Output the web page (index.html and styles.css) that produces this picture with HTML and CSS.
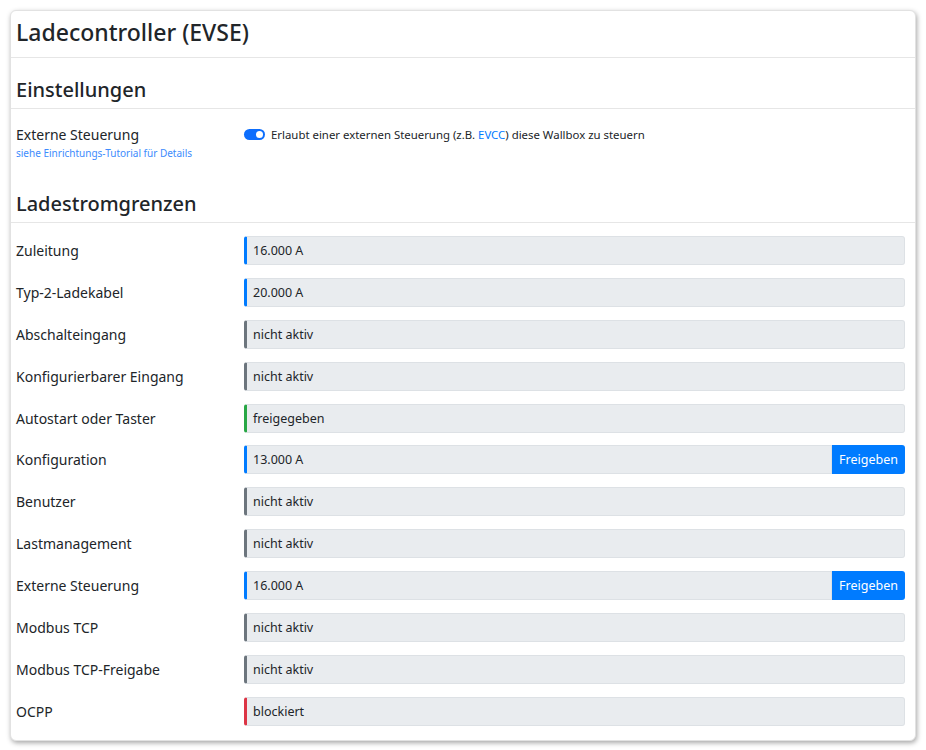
FILE: index.html
```html
<!DOCTYPE html>
<html lang="de">
<head>
    <meta charset="UTF-8">
    <meta name="viewport" content="width=device-width, initial-scale=1.0">
    <title>Ladecontroller (EVSE)</title>
    <link rel="stylesheet" href="styles.css">
</head>
<body>
    <div class="card">
        <div class="card-header">Ladecontroller (EVSE)</div>

        <h2 class="section-title">Einstellungen</h2>
        <div class="setting-row">
            <div class="setting-label">
                <div>Externe Steuerung</div>
                <a class="hint" href="#">siehe Einrichtungs-Tutorial für Details</a>
            </div>
            <div class="setting-control">
                <span class="switch"><span class="knob"></span></span>
                <span>Erlaubt einer externen Steuerung (z.B. <a href="#">EVCC</a>) diese Wallbox zu steuern</span>
            </div>
        </div>

        <h2 class="section-title">Ladestromgrenzen</h2>
        <div class="limits">
            <div class="limit-row">
                <div class="limit-label">Zuleitung</div>
                <div class="limit-value blue">16.000 A</div>
            </div>
            <div class="limit-row">
                <div class="limit-label">Typ-2-Ladekabel</div>
                <div class="limit-value blue">20.000 A</div>
            </div>
            <div class="limit-row">
                <div class="limit-label">Abschalteingang</div>
                <div class="limit-value gray">nicht aktiv</div>
            </div>
            <div class="limit-row">
                <div class="limit-label">Konfigurierbarer Eingang</div>
                <div class="limit-value gray">nicht aktiv</div>
            </div>
            <div class="limit-row">
                <div class="limit-label">Autostart oder Taster</div>
                <div class="limit-value green">freigegeben</div>
            </div>
            <div class="limit-row">
                <div class="limit-label">Konfiguration</div>
                <div class="limit-group">
                    <div class="limit-value blue">13.000 A</div>
                    <button class="btn">Freigeben</button>
                </div>
            </div>
            <div class="limit-row">
                <div class="limit-label">Benutzer</div>
                <div class="limit-value gray">nicht aktiv</div>
            </div>
            <div class="limit-row">
                <div class="limit-label">Lastmanagement</div>
                <div class="limit-value gray">nicht aktiv</div>
            </div>
            <div class="limit-row">
                <div class="limit-label">Externe Steuerung</div>
                <div class="limit-group">
                    <div class="limit-value blue">16.000 A</div>
                    <button class="btn">Freigeben</button>
                </div>
            </div>
            <div class="limit-row">
                <div class="limit-label">Modbus TCP</div>
                <div class="limit-value gray">nicht aktiv</div>
            </div>
            <div class="limit-row">
                <div class="limit-label">Modbus TCP-Freigabe</div>
                <div class="limit-value gray">nicht aktiv</div>
            </div>
            <div class="limit-row">
                <div class="limit-label">OCPP</div>
                <div class="limit-value red">blockiert</div>
            </div>
        </div>
    </div>
</body>
</html>
```

FILE: styles.css
```css
body {
    margin: 0;
    padding: 10px;
    font-family: "Noto Sans", "Open Sans", sans-serif;
    color: #212529;
    background-color: #fff;
}
.card {
    width: 906px;
    height: 731px;
    box-sizing: border-box;
    background-color: #fff;
    border: 1px solid #e2e2e2;
    border-radius: 6px;
    box-shadow: 1px 2px 5px rgba(0, 0, 0, 0.35);
    overflow: hidden;
}
.card-header {
    height: 46px;
    line-height: 42px;
    padding: 0 5px;
    font-size: 23px;
    font-weight: 500;
    border-bottom: 1px solid #e6e6e6;
}
.section-title {
    margin: 0;
    padding: 20px 5px 6px;
    font-size: 20px;
    line-height: 24px;
    font-weight: 500;
    border-bottom: 1px solid #e6e6e6;
}
.setting-row {
    display: flex;
    padding: 16px 5px 11px;
}
.setting-label {
    width: 228px;
    font-size: 14px;
    line-height: 20px;
}
.hint {
    display: block;
    font-size: 10px;
    line-height: 16px;
    color: #3d8bfd;
    text-decoration: none;
}
.setting-control {
    display: flex;
    align-items: flex-start;
    gap: 6px;
    font-size: 11.4px;
    line-height: 20px;
}
.setting-control a {
    color: #007bff;
    text-decoration: none;
}
.switch {
    position: relative;
    width: 21px;
    height: 11px;
    margin-top: 4px;
    border-radius: 6px;
    background-color: #0d6efd;
}
.knob {
    position: absolute;
    top: 2px;
    right: 2px;
    width: 7px;
    height: 7px;
    border-radius: 50%;
    background-color: #fff;
}
.limits {
    padding: 13px 10px 0 5px;
}
.limit-row {
    display: flex;
    align-items: center;
    height: 29px;
    margin-bottom: 12.9px;
}
.limit-label {
    width: 228px;
    font-size: 14px;
}
.limit-group {
    flex: 1;
    display: flex;
}
.limit-value {
    flex: 1;
    box-sizing: border-box;
    height: 29px;
    line-height: 27px;
    padding-left: 6px;
    font-size: 12.5px;
    background-color: #e9ecef;
    border: 1px solid #dde1e5;
    border-left: 3px solid #6c757d;
    border-radius: 3px;
}
.limit-group .limit-value {
    border-top-right-radius: 0;
    border-bottom-right-radius: 0;
}
.limit-value.blue {
    border-left-color: #007bff;
}
.limit-value.gray {
    border-left-color: #6c757d;
}
.limit-value.green {
    border-left-color: #28a745;
}
.limit-value.red {
    border-left-color: #dc3545;
}
.btn {
    width: 73px;
    height: 29px;
    border: none;
    border-radius: 0 3px 3px 0;
    background-color: #007bff;
    color: #fff;
    font-family: inherit;
    font-size: 12.5px;
    padding: 0;
    cursor: pointer;
}
```
